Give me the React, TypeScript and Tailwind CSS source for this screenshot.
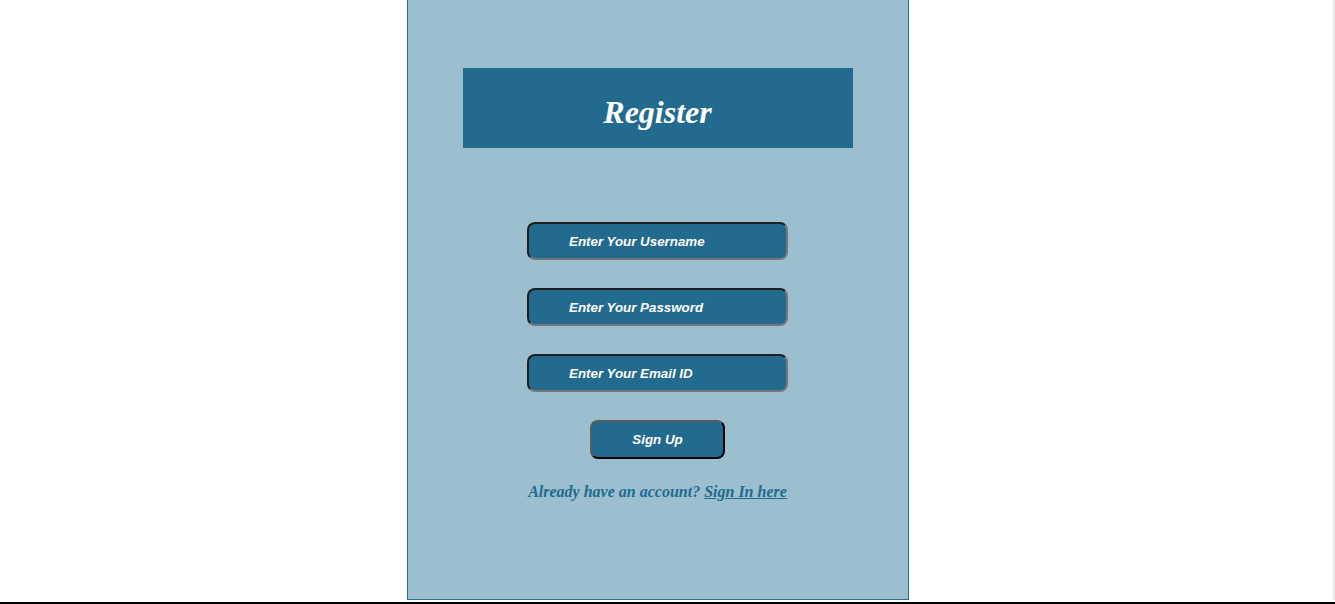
export default function App() {
  const fields = [
    { placeholder: "Enter Your Username", type: "text" },
    { placeholder: "Enter Your Password", type: "password" },
    { placeholder: "Enter Your Email ID", type: "email" },
  ];

  return (
    <div className="h-[604px] w-full bg-white">
      <div className="flex justify-center border-b-2 border-black pb-[2px]">
        <div className="flex flex-1 justify-center border-r-2 border-r-[#ececec] pr-[18px]">
          <div className="flex h-[600px] w-[502px] flex-col items-center border-x border-b border-[#2b6f8f] bg-[#9bbfcf] pt-[68px]">
            <div className="flex h-[80px] w-[390px] items-center justify-center bg-[#226a8e]">
              <h1 className="mt-[8px] font-['Liberation_Serif',serif] text-[32px] font-bold italic text-white">
                Register
              </h1>
            </div>

            <form className="mt-[74px] flex flex-col items-center gap-[28px]">
              {fields.map((field) => (
                <input
                  key={field.placeholder}
                  type={field.type}
                  placeholder={field.placeholder}
                  className="h-[38px] w-[261px] rounded-[8px] border-2 border-t-[#1f1f1f] border-l-[#1f1f1f] border-r-[#767676] border-b-[#767676] bg-[#226a8e] pl-[40px] font-['Liberation_Sans',sans-serif] text-[13.33px] font-bold italic text-white outline-none placeholder:text-white"
                />
              ))}

              <button
                type="button"
                className="h-[39px] w-[135px] rounded-[8px] border-2 border-t-[#5a5a5a] border-l-[#5a5a5a] border-r-black border-b-black bg-[#226a8e] font-['Liberation_Sans',sans-serif] text-[13.33px] font-bold italic text-white"
              >
                Sign Up
              </button>
            </form>

            <p className="mt-[21px] font-['Liberation_Serif',serif] text-[16px] font-bold italic text-[#226a8e]">
              Already have an account?{" "}
              <a href="#" className="underline">
                Sign In here
              </a>
            </p>
          </div>
        </div>
      </div>
    </div>
  );
}
